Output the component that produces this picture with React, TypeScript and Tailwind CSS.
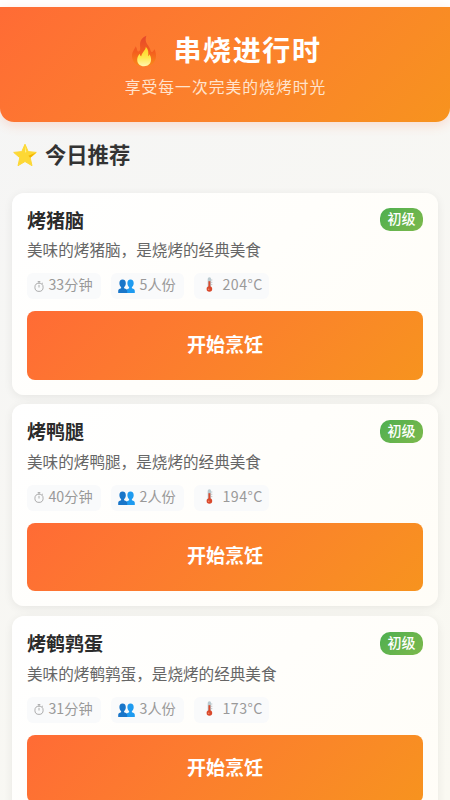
import React from 'react';

interface Recipe {
  id: number;
  name: string;
  level: string;
  minutes: number;
  servings: number;
  temperature: number;
}

const recipes: Recipe[] = [
  { id: 1, name: '烤猪脑', level: '初级', minutes: 33, servings: 5, temperature: 204 },
  { id: 2, name: '烤鸭腿', level: '初级', minutes: 40, servings: 2, temperature: 194 },
  { id: 3, name: '烤鹌鹑蛋', level: '初级', minutes: 31, servings: 3, temperature: 173 },
];

const FlameIcon: React.FC = () => (
  <svg className="mt-1 w-[26px] h-[32px] shrink-0" viewBox="0 0 26 33">
    <defs>
      <linearGradient id="flame" x1="0" y1="0" x2="0" y2="1">
        <stop offset="0" stopColor="#e5482c" />
        <stop offset="0.55" stopColor="#f4601d" />
        <stop offset="1" stopColor="#fa8a18" />
      </linearGradient>
      <linearGradient id="flameCore" x1="0" y1="0" x2="0" y2="1">
        <stop offset="0" stopColor="#ffd21f" />
        <stop offset="0.55" stopColor="#ffe74d" />
        <stop offset="1" stopColor="#fff6b0" />
      </linearGradient>
    </defs>
    <path
      d="M15.5 .8C11 2.5 9 6 8.9 9.8C8.8 12 9.5 14 8.8 15.8C8.2 17.5 6.4 17.2 6 15.6C5.7 14.3 5.3 13 4.4 11.6C4 14 .6 16.8 .6 21.5C.6 28 5.5 32.5 13 32.5C20.5 32.5 25.4 28 25.4 21.5C25.4 18.5 24.6 17 24.1 14.8C22.8 15.6 22.6 17.2 21.4 17.5C20 17.8 19.8 16 19.2 14.2C18.4 11.8 16.2 10 15.2 7.4C14.5 5.2 14.6 3 15.5 .8Z"
      fill="url(#flame)"
    />
    <path
      d="M14.8 12C15.3 15 10.5 18 10.2 22C9 21.5 8.8 20.3 8.7 19.3C7 21 6 23 6 25.5C6 29.7 8.9 32.2 13 32.2C17.3 32.2 20.3 29.5 20.3 25.3C20.3 23 19.5 21.3 18.8 19.8C18.4 20.7 18.1 21.4 17.3 21.8C17.8 18 17.6 14.5 14.8 12Z"
      fill="url(#flameCore)"
    />
  </svg>
);

const StarIcon: React.FC = () => (
  <svg className="mt-0.5 w-6 h-6 shrink-0" viewBox="0 0 24 24">
    <path
      d="M12 1.2L15.2 8.6L23.3 9.4L17.2 14.7L19 22.7L12 18.5L5 22.7L6.8 14.7L.7 9.4L8.8 8.6Z"
      fill="#fdd835"
      stroke="#fdd835"
      strokeWidth="1"
      strokeLinejoin="round"
    />
    <path d="M23.2 9.4L17.2 14.7L15.4 12.8Z" fill="#f4b400" />
    <path d="M12 3.2L13.3 8.7L12.3 9.8Z" fill="#fff59d" />
  </svg>
);

const TimerIcon: React.FC = () => (
  <svg className="w-[10px] h-[11px] shrink-0" viewBox="0 0 10 11" fill="none" stroke="#999999" strokeWidth="0.8">
    <circle cx="5" cy="6.3" r="4.1" />
    <path d="M3.7 .6H6.3M5 .6V2.2M5 3.9V6.5M8 2.7L8.9 1.9" />
  </svg>
);

const PeopleIcon: React.FC = () => (
  <svg className="w-[17px] h-[14px] shrink-0" viewBox="0 0 17 14">
    <path
      d="M12.5 .4C10.4 .4 9.3 2 9.4 4.2C9.5 6.1 10.1 7.3 11.1 8V9.3L8.6 10.4V14H16.8V12C16.8 10.3 15.8 9.9 13.9 9.3V8C15 7.3 15.6 6 15.7 4.2C15.8 2 14.6 .4 12.5 .4Z"
      fill="#1e9bf0"
    />
    <path
      d="M4.6 .4C2.4 .4 1.3 2 1.4 4.2C1.5 6.1 2.1 7.3 3.1 8V9.3C1.2 9.9 .2 10.3 .2 12V14H9.2V12C9.2 10.3 8.1 9.9 6.1 9.3V8C7.1 7.3 7.8 6 7.8 4.2C7.9 2 6.7 .4 4.6 .4Z"
      fill="#1976c9"
    />
  </svg>
);

const ThermometerIcon: React.FC = () => (
  <svg className="mb-[3px] w-[7px] h-[15px] shrink-0" viewBox="0 0 7 15">
    <rect x="1.7" y="0.3" width="3.4" height="11" rx="1.7" fill="#b9c9cf" />
    <circle cx="3.4" cy="12" r="2.8" fill="#d9492c" />
    <path d="M3.4 4.2V12" stroke="#d9492c" strokeWidth="1.9" />
    <path d="M5.2 3H6.3M5.2 5.3H6.3M5.2 7.6H6.3" stroke="#8f9a9f" strokeWidth="0.6" />
    <circle cx="2.7" cy="12.3" r="0.8" fill="#f48a68" />
  </svg>
);

const RecipeCard: React.FC<{ recipe: Recipe }> = ({ recipe }) => (
  <article className="h-[202px] shrink-0 rounded-xl bg-linear-135 from-white to-[#fffdf7] px-[15px] pt-[15px] shadow-[0_2px_10px_rgba(0,0,0,0.07)]">
    <div className="flex h-6 items-center justify-between">
      <h3 className="text-[19px] leading-6 font-bold text-[#2b2b2b]">{recipe.name}</h3>
      <span className="h-[23px] w-[43px] rounded-[10px] bg-linear-135 from-[#4caf50] to-[#7cb94b] text-center text-[14px] leading-[21px] font-medium text-white">
        {recipe.level}
      </span>
    </div>
    <p className="mt-[5.5px] text-[15.6px] leading-6 text-[#666666]">美味的{recipe.name}，是烧烤的经典美食</p>
    <div className="mt-[12px] flex h-[26px] gap-[10px] text-[14.2px] leading-[23px] text-[#999999]">
      <span className="flex w-[74px] items-center rounded-md bg-[#f9fafb] pl-[7px]">
        <TimerIcon />
        <span className="ml-[4.5px] h-[26px]">{recipe.minutes}分钟</span>
      </span>
      <span className="flex w-[73px] items-center rounded-md bg-[#f9fafb] pl-[7px]">
        <PeopleIcon />
        <span className="ml-[4.5px] h-[26px]">{recipe.servings}人份</span>
      </span>
      <span className="flex w-[75px] items-center rounded-md bg-[#f9fafb] pl-3">
        <ThermometerIcon />
        <span className="ml-[9.5px] h-[26px] leading-[22px] tracking-[0.45px]">{recipe.temperature}°C</span>
      </span>
    </div>
    <button className="mt-3 block h-[68.5px] w-full rounded-lg bg-linear-135 from-[#ff6b35] to-[#f7931e] pb-[3px] text-[19px] font-bold text-white">
      开始烹饪
    </button>
  </article>
);

const App: React.FC = () => {
  return (
    <div className="h-[800px] w-full overflow-hidden bg-white pt-[6.5px] font-['Noto_Sans_CJK_SC',sans-serif]">
      <div className="flex h-full flex-col bg-linear-135 from-[#f5f5f5] to-[#faf9f2]">
        <header className="flex h-[115px] shrink-0 flex-col items-center rounded-b-[14px] bg-linear-135 from-[#ff6b35] to-[#f7931e] pt-[24px] shadow-[0_3px_12px_rgba(255,107,53,0.2)]">
          <h1 className="ml-[3px] flex h-9 items-center text-[28px] leading-9 font-bold tracking-[1.6px] text-white">
            <FlameIcon />
            <span className="ml-4">串烧进行时</span>
          </h1>
          <p className="mt-2 ml-px text-[15.8px] leading-6 tracking-[1px] text-[#ffe3cd]">享受每一次完美的烧烤时光</p>
        </header>
        <main className="px-3">
          <h2 className="mt-[17px] flex h-[30px] items-center gap-[8px] pl-px text-[21.3px] leading-[30px] font-bold text-[#333333]">
            <StarIcon />
            今日推荐
          </h2>
          <div className="mt-[24px] flex flex-col gap-[9.8px]">
            {recipes.map((recipe) => (
              <RecipeCard key={recipe.id} recipe={recipe} />
            ))}
          </div>
        </main>
      </div>
    </div>
  );
};

export default App;
